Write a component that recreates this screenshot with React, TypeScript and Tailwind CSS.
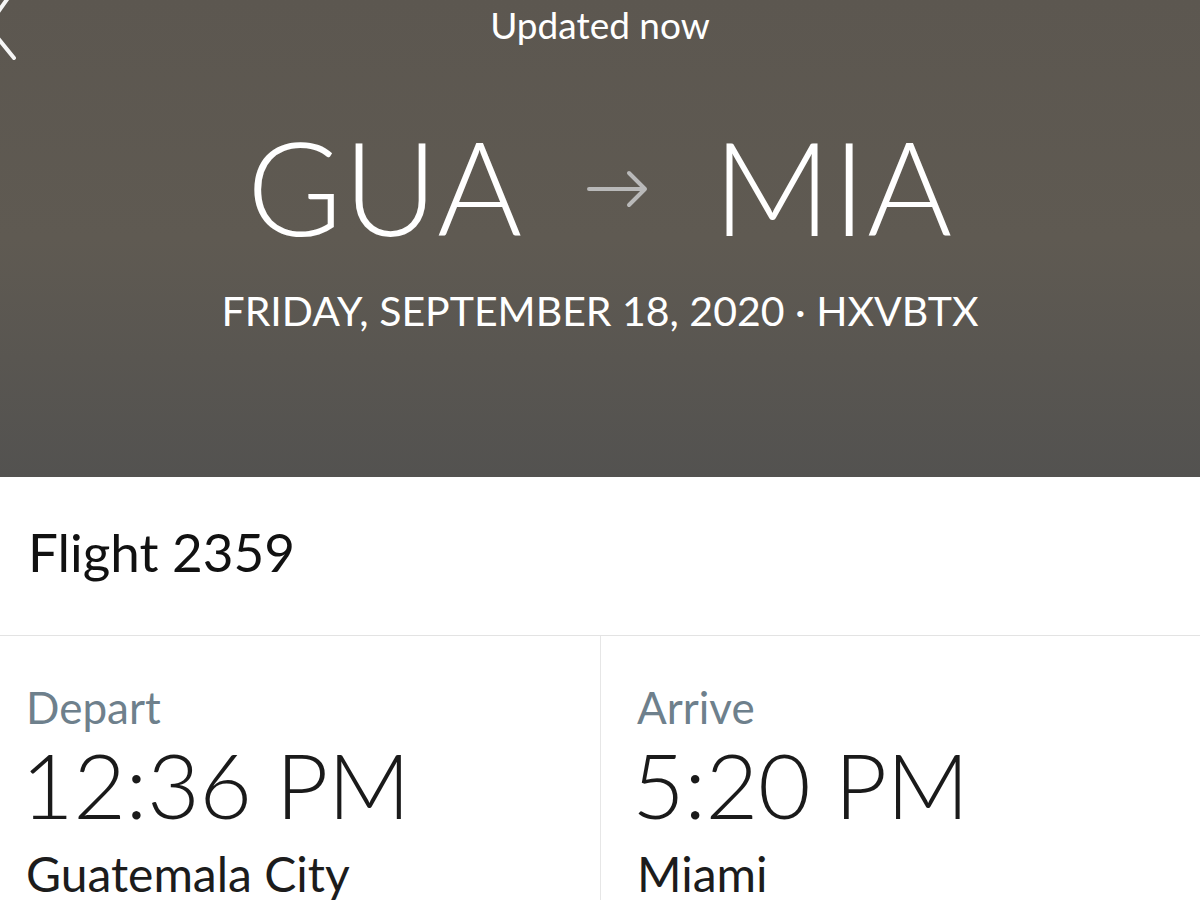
import React from "react";

const sans = "font-['Lato','Open_Sans','Noto_Sans',sans-serif]";

const TimeBlock = ({ label, time, city }: { label: string; time: string; city: string }) => (
  <div className="flex flex-col pt-[50px]">
    <span className="text-[44px] leading-[42px] text-[#6e808c]">{label}</span>
    <span className="text-[91px] leading-[112px] font-light text-[#1a1a1a] -ml-[5px] tracking-[-0.5px]">{time}</span>
    <span className="text-[48px] leading-[56px] text-[#1c1c1c] mt-[6px]">{city}</span>
  </div>
);

export default function App() {
  return (
    <div className={`w-[1200px] h-[900px] overflow-hidden bg-white ${sans}`}>
      {/* Header */}
      <header className="relative h-[477px] bg-gradient-to-b from-[#5c5750] via-[#5f5a52] to-[#535250] flex flex-col items-center text-white">
        <svg className="absolute -left-[14px] -top-[14px]" width="40" height="80" viewBox="0 0 40 80" fill="none">
          <polyline points="22,12 2,40 28,72" stroke="#f5f5f5" strokeWidth="4" strokeLinecap="round" strokeLinejoin="round" />
        </svg>
        <div className="text-[37px] leading-[40px] mt-[5px]">Updated now</div>
        <div className="flex items-center mt-[76px] font-light text-[130px] leading-[130px] tracking-[1px]">
          <span>GUA</span>
          <svg className="mx-[64px] mt-[6px]" width="62" height="40" viewBox="0 0 62 40" fill="none">
            <path d="M2 20 H58 M42 4 L58 20 L42 36" stroke="#b9b9b9" strokeWidth="4" strokeLinecap="round" strokeLinejoin="round" />
          </svg>
          <span>MIA</span>
        </div>
        <div className="mt-[36px] text-[41px] leading-[48px]">
          FRIDAY, SEPTEMBER 18, 2020 · HXVBTX
        </div>
      </header>

      {/* Flight number */}
      <div className="h-[159px] border-b border-[#e3e3e3] flex items-center px-[28px]">
        <span className="text-[53px] leading-[58px] text-[#111] -mt-[8px]">Flight 2359</span>
      </div>

      {/* Depart / Arrive */}
      <div className="grid grid-cols-[601px_1fr]">
        <div className="border-r border-[#e6e6e6] pl-[26px]">
          <TimeBlock label="Depart" time="12:36 PM" city="Guatemala City" />
        </div>
        <div className="pl-[36px]">
          <TimeBlock label="Arrive" time="5:20 PM" city="Miami" />
        </div>
      </div>
    </div>
  );
}
